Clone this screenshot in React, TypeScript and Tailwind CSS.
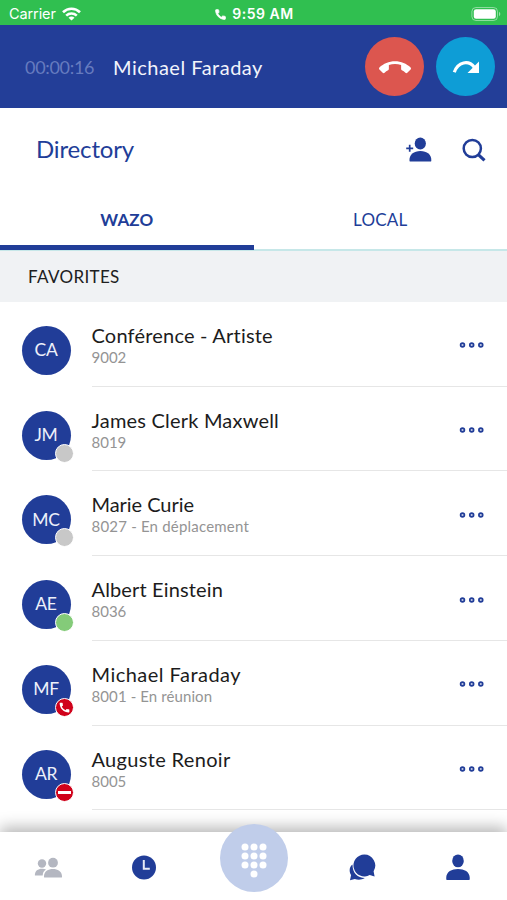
import React from 'react';
import { MdCall, MdCallEnd } from 'react-icons/md';

type Status = 'none' | 'offline' | 'online' | 'call' | 'busy';

const contacts: { initials: string; name: string; detail: string; status: Status; nameStyle: string; detailStyle: string }[] = [
  { initials: 'CA', name: 'Conférence - Artiste', detail: '9002', status: 'none', nameStyle: 'tracking-[0.2px]', detailStyle: 'tracking-[0px]' },
  { initials: 'JM', name: 'James Clerk Maxwell', detail: '8019', status: 'offline', nameStyle: 'tracking-[0.2px]', detailStyle: 'tracking-[0px]' },
  { initials: 'MC', name: 'Marie Curie', detail: '8027 - En déplacement', status: 'offline', nameStyle: 'tracking-[-0.05px]', detailStyle: 'tracking-[0.2px]' },
  { initials: 'AE', name: 'Albert Einstein', detail: '8036', status: 'online', nameStyle: 'tracking-[0.15px]', detailStyle: 'tracking-[0px]' },
  { initials: 'MF', name: 'Michael Faraday', detail: '8001 - En réunion', status: 'call', nameStyle: 'tracking-[0.48px]', detailStyle: 'tracking-[0.1px]' },
  { initials: 'AR', name: 'Auguste Renoir', detail: '8005', status: 'busy', nameStyle: 'tracking-[0.33px]', detailStyle: 'tracking-[0px]' },
];

const statusColors = {
  offline: 'bg-[#c8c8c8]',
  online: 'bg-[#84cb79]',
  call: 'bg-[#d0021b]',
  busy: 'bg-[#d0021b]',
};

function StatusBar() {
  return (
    <div className="h-[25px] shrink-0 bg-[#30bf50] grid grid-cols-3 items-center pt-[3px] text-white font-['Inter',sans-serif]">
      <div className="flex items-center pl-[9px] gap-[6px]">
        <span className="text-[14.5px] leading-5 tracking-[-0.1px]">Carrier</span>
        <svg width="19" height="14" viewBox="0 0 19 14" fill="none" stroke="currentColor" strokeWidth="2.6">
          <path d="M1 5.2C5.8.6 13.2.6 18 5.2" />
          <path d="M4.2 8.6C7.2 5.8 11.8 5.8 14.8 8.6" />
          <path d="M9.5 13.6 6.5 10.7C8.2 9.2 10.8 9.2 12.5 10.7Z" fill="currentColor" stroke="none" />
        </svg>
      </div>
      <div className="flex items-center justify-center gap-[5px] pl-px">
        <svg className="mt-px" width="13" height="13" viewBox="0 0 24 24" fill="currentColor" stroke="currentColor" strokeWidth="1.5" strokeLinejoin="round">
          <path d="M20 15.400c-1.200 0-2.400-.2-3.500-.6-.4-.1-.8 0-1 .3L13.500 17C11 15.700 8.400 13.100 7 10.300l2-1.800c.3-.3.400-.7.2-1C8.800 6.400 8.600 5.200 8.600 4c0-.5-.4-1-1-1H4.200C3.600 3 3 3.200 3 4c0 9.300 7.700 17 17 17 .7 0 1-.6 1-1.200v-3.400c0-.5-.5-1-1-1Z" />
        </svg>
        <span className="text-[14px] leading-5 font-semibold tracking-[0.5px] whitespace-nowrap">9:59 AM</span>
      </div>
      <div className="flex justify-end pr-[6px]">
        <svg width="30" height="14" viewBox="0 0 30 14">
          <rect x="0.9" y="0.5" width="25.6" height="13" rx="4" fill="none" stroke="#fff" strokeOpacity="0.45" />
          <rect x="2.8" y="2.2" width="22" height="9.6" rx="2.3" fill="#fff" />
          <path d="M28 4.8v4.4c1.8-.8 1.8-3.6 0-4.4Z" fill="#fff" fillOpacity="0.5" />
        </svg>
      </div>
    </div>
  );
}

function CallBar() {
  return (
    <div className="h-[83px] shrink-0 bg-[#233e98] flex items-center pl-[25px] pr-3">
      <span className="w-[88px] text-[18px] tracking-[-0.3px] pt-px text-[#667bbf]">00:00:16</span>
      <span className="text-[20px] tracking-[0.5px] text-[#f2f4fb]">Michael Faraday</span>
      <div className="ml-auto flex gap-3">
        <button className="size-[59px] rounded-full bg-[#dc564f] flex items-center justify-center text-white">
          <MdCallEnd className="size-[32px] mt-[2px]" />
        </button>
        <button className="size-[59px] rounded-full bg-[#0e9dd6] flex items-center justify-center">
          <svg width="28" height="16" viewBox="0 0 28 16">
            <path d="M2.3 13.2C6 2.8 16.5.6 22.500 8.500" fill="none" stroke="#fff" strokeWidth="3.200" />
            <path d="M27 2.500v11.500H15.500Z" fill="#fff" />
          </svg>
        </button>
      </div>
    </div>
  );
}

function DirectoryHeader() {
  return (
    <div className="h-[83px] shrink-0 flex items-center pl-[36px] pr-[21px] text-[#213d98]">
      <h1 className="text-[24px] tracking-[-0.15px] pb-px">Directory</h1>
      <svg className="ml-auto" width="27" height="25" viewBox="0 0 27 25" fill="currentColor">
        <ellipse cx="15.3" cy="6.6" rx="5.6" ry="6" />
        <path d="M4.5 24c-.6-6.600 4.500-10 10.900-10s11.500 3.400 10.900 10q-.2.600-1 .600H5.500q-.8 0-1-.6Z" />
        <path d="M4.700 7.800v7M1.200 11.300h7" stroke="currentColor" strokeWidth="1.700" />
      </svg>
      <svg className="ml-[30px]" width="24" height="24" viewBox="0 0 24 24" fill="none" stroke="currentColor">
        <circle cx="10.300" cy="10.500" r="8.600" strokeWidth="2.500" />
        <path d="m16 16.400 6.500 6" strokeWidth="3.200" />
      </svg>
    </div>
  );
}

function Tabs() {
  return (
    <div className="h-[60px] shrink-0 grid grid-cols-2 border-b border-[#c6e7e8] text-[17px] text-[#213d98]">
      <div className="border-b-[5px] border-[#213d98] flex justify-center pt-[17px] leading-6 font-bold tracking-[0.1px]">WAZO</div>
      <div className="border-b border-[#c6e7e8] flex justify-center pt-[17px] leading-6 tracking-[0.2px]">LOCAL</div>
    </div>
  );
}

function Avatar({ initials, status }: { initials: string; status: Status }) {
  return (
    <div className="relative size-[49px] shrink-0 rounded-full bg-[#213d98] flex items-center justify-center text-[17.5px] tracking-[-0.3px] text-[#edf0fa]">
      {initials}
      {status !== 'none' && (
        <span className={`absolute left-[33px] top-[33px] size-[19px] rounded-full border border-white flex items-center justify-center text-white ${statusColors[status]}`}>
          {status === 'call' && <MdCall className="size-[13px]" />}
          {status === 'busy' && <span className="w-[13px] h-[3px] bg-white" />}
        </span>
      )}
    </div>
  );
}

function ContactRow({ contact }: { contact: (typeof contacts)[number] }) {
  return (
    <div className="h-[84.75px] shrink-0 flex pl-[21.5px]">
      <div className="pt-[24px]">
        <Avatar initials={contact.initials} status={contact.status} />
      </div>
      <div className="ml-[21px] flex-1 flex border-b border-[#e6e6e6] pt-[21px]">
        <div>
          <p className={`text-[20px] leading-[24px] text-[#1c1c1c] ${contact.nameStyle}`}>{contact.name}</p>
          <p className={`text-[15px] leading-[20px] text-[#949494] ${contact.detailStyle}`}>{contact.detail}</p>
        </div>
        <svg className="ml-auto mr-[22px] mt-[18.5px]" width="26" height="8" viewBox="0 0 26 8" fill="#c4cbe4" stroke="#213d98" strokeWidth="1.700">
          <circle cx="3.500" cy="4" r="1.900" />
          <circle cx="12.700" cy="4" r="1.900" />
          <circle cx="21.800" cy="4" r="1.900" />
        </svg>
      </div>
    </div>
  );
}

const keys = [[5, 5], [14, 5], [23, 5], [5, 14], [14, 14], [23, 14], [5, 23], [14, 23], [23, 23], [14, 32]];

function BottomNav() {
  return (
    <div className="relative h-[68px] shrink-0 bg-white shadow-[0_-5px_14px_rgba(0,0,0,0.28)] flex text-[#213d98]">
      <div className="w-[96px] flex justify-center pt-[25px]">
        <svg width="28" height="22" viewBox="0 0 28 22" fill="#b4b7c1">
          <circle cx="8" cy="6.500" r="4.200" />
          <path d="M.9 18.500C.7 13.500 4.500 11.500 8.500 11.700q2 0 3.500.8C9.600 14 8.900 15.500 8.700 18.500Z" />
          <circle cx="19" cy="5.700" r="4.900" />
          <path d="M10 20c-.3-5.700 4-8.100 9-8.100s9.300 2.400 9 8.100q0 .500-.8.500H10.800q-.8 0-.8-.5Z" />
        </svg>
      </div>
      <div className="w-[96px] flex justify-center pt-[23px]">
        <svg width="24" height="25" viewBox="0 0 24 25">
          <circle cx="12" cy="12.500" r="12" fill="currentColor" />
          <path d="M11.800 5v8.700h6" fill="none" stroke="#e7eaf6" strokeWidth="2" />
        </svg>
      </div>
      <div className="w-[124px] flex justify-center">
        <div className="-mt-[8px] size-[68px] rounded-full bg-[#c0cdea] flex justify-center pt-[18px]">
          <svg width="28" height="36" viewBox="0 0 28 36" fill="#fff">
            {keys.map(([x, y]) => (
              <circle key={`${x}-${y}`} cx={x} cy={y} r="3.500" />
            ))}
          </svg>
        </div>
      </div>
      <div className="w-[92px] flex justify-center pt-[22px]">
        <svg width="27" height="27" viewBox="0 0 27 27" fill="currentColor">
          <path d="M1 26.200 2.100 21C-.2 17.500.2 12.500 3.600 10.500c-.5 7.800 4.700 13.500 12.200 13.600-3 2-7.100 2.200-10 .9Z" />
          <path d="M15.300.6a10.900 10.900 0 1 0 5.400 20.400l4.900 1.400-1-5.200A10.900 10.900 0 0 0 15.300.6Z" />
        </svg>
      </div>
      <div className="flex-1 flex justify-center pt-[22px]">
        <svg width="24" height="27" viewBox="0 0 24 27" fill="currentColor">
          <ellipse cx="12" cy="6.900" rx="5.800" ry="6.400" />
          <path d="M.3 25.200C-.5 18 5.500 15 12 15s12.500 3 11.700 10.200q-.1.900-1 .9H1.300q-.9 0-1-.9Z" />
        </svg>
      </div>
    </div>
  );
}

export default function App() {
  return (
    <div className="w-[507px] h-[900px] overflow-hidden bg-white flex flex-col font-['Lato',sans-serif]">
      <StatusBar />
      <CallBar />
      <DirectoryHeader />
      <Tabs />
      <div className="h-[50.75px] shrink-0 bg-[#f0f2f4] flex items-center pl-[28px] text-[17px] tracking-[0.35px] text-[#202020]">FAVORITES</div>
      <div className="flex-1 min-h-0 overflow-hidden flex flex-col">
        {contacts.map((contact) => (
          <ContactRow key={contact.initials} contact={contact} />
        ))}
      </div>
      <BottomNav />
    </div>
  );
}
